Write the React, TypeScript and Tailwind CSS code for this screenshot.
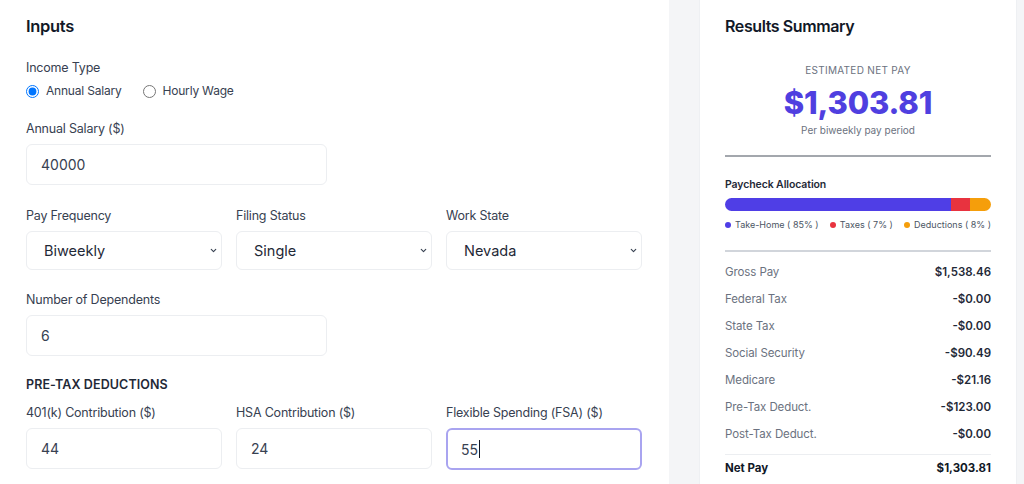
import { ChevronDown } from "lucide-react";

const font = { fontFamily: "Inter, 'Noto Sans', sans-serif" };

function Field({ label, value, focused }: { label: string; value: string; focused?: boolean }) {
  return (
    <div>
      <div className="text-[12.5px] leading-5 text-[#374151] tracking-[-0.2px] mb-[5px]">{label}</div>
      <div
        className={
          focused
            ? "h-[42px] rounded-md border-2 border-[#a9a4f0] bg-white flex items-center px-[13px] text-[14px] text-[#374151]"
            : "h-[41px] rounded-md border border-[#eceef1] bg-white flex items-center px-[14px] text-[14px] text-[#374151]"
        }
      >
        {value}
        {focused && <span className="w-px h-[18px] bg-[#111827] ml-[1px]" />}
      </div>
    </div>
  );
}

function SelectBox({ label, value }: { label: string; value: string }) {
  return (
    <div>
      <div className="text-[12.5px] leading-5 text-[#374151] tracking-[-0.2px] mb-[5px]">{label}</div>
      <div className="h-[39px] rounded-md border border-[#eceef1] bg-white flex items-center justify-between pl-[17px] pr-[3px] text-[14.5px] text-[#1f2937]">
        <span>{value}</span>
        <ChevronDown className="w-[9px] h-[9px] text-[#374151]" strokeWidth={3} />
      </div>
    </div>
  );
}

const rows = [
  ["Gross Pay", "$1,538.46"],
  ["Federal Tax", "-$0.00"],
  ["State Tax", "-$0.00"],
  ["Social Security", "-$90.49"],
  ["Medicare", "-$21.16"],
  ["Pre-Tax Deduct.", "-$123.00"],
  ["Post-Tax Deduct.", "-$0.00"],
];

export default function App() {
  return (
    <div className="w-[1024px] h-[484px] overflow-hidden bg-[#f4f5f7] flex" style={font}>
      {/* Inputs panel */}
      <div className="w-[669px] bg-white pl-[26px] pr-[27px] pt-[14px]">
        <h2 className="text-[16.5px] leading-6 font-semibold text-[#111827] tracking-[-0.3px]">Inputs</h2>

        <div className="mt-[20px] text-[12.5px] leading-5 text-[#374151] tracking-[-0.2px]">Income Type</div>
        <div className="mt-[3px] h-5 flex items-center gap-[21px] text-[12px] text-[#374151] tracking-[-0.2px]">
          <label className="flex items-center gap-[7px]">
            <input type="radio" name="income" defaultChecked className="w-[13px] h-[13px] m-0" />
            Annual Salary
          </label>
          <label className="flex items-center gap-[7px]">
            <input type="radio" name="income" className="w-[13px] h-[13px] m-0" />
            Hourly Wage
          </label>
        </div>

        <div className="mt-[18px] w-[301px]">
          <Field label="Annual Salary ($)" value="40000" />
        </div>

        <div className="mt-[21px] grid grid-cols-3 gap-[14px]">
          <SelectBox label="Pay Frequency" value="Biweekly" />
          <SelectBox label="Filing Status" value="Single" />
          <SelectBox label="Work State" value="Nevada" />
        </div>

        <div className="mt-[20px] w-[301px]">
          <Field label="Number of Dependents" value="6" />
        </div>

        <div className="mt-[19px] text-[12.5px] leading-5 font-semibold text-[#1f2937] tracking-[0.1px]">PRE-TAX DEDUCTIONS</div>
        <div className="mt-[8px] grid grid-cols-3 gap-[14px]">
          <Field label="401(k) Contribution ($)" value="44" />
          <Field label="HSA Contribution ($)" value="24" />
          <Field label="Flexible Spending (FSA) ($)" value="55" focused />
        </div>
      </div>

      {/* Results panel */}
      <div className="ml-[30px] w-[318px] bg-white border-x border-[#eef0f3] px-[25px] pt-[14px]">
        <h2 className="text-[16px] leading-6 font-semibold text-[#111827] tracking-[-0.4px]">Results Summary</h2>

        <div className="mt-[24px] flex flex-col items-center">
          <div className="text-[10px] leading-4 text-[#6b7280] tracking-[0.3px]">ESTIMATED NET PAY</div>
          <div className="mt-[5px] text-[31px] leading-[40px] font-extrabold text-[#4f3fe0] tracking-[-0.2px]">$1,303.81</div>
          <div className="-mt-[1px] text-[10px] leading-4 text-[#6b7280]">Per biweekly pay period</div>
        </div>

        <div className="mt-[17px] h-[2px] bg-[#a3a7ad]" />

        <div className="mt-[20px] text-[10.5px] leading-4 font-semibold text-[#1f2937] tracking-[-0.1px]">Paycheck Allocation</div>
        <div className="mt-[5px] h-[13px] rounded-full overflow-hidden flex">
          <div className="bg-[#4f3ee6] w-[85%]" />
          <div className="bg-[#e8333f] w-[7%]" />
          <div className="bg-[#f59e0b] w-[8%]" />
        </div>
        <div className="mt-[8px] flex items-center justify-between text-[9px] leading-3 text-[#4b5563]">
          <span className="flex items-center gap-[4px]">
            <span className="w-[6px] h-[6px] rounded-full bg-[#4f3ee6]" />
            Take-Home ( 85% )
          </span>
          <span className="flex items-center gap-[4px]">
            <span className="w-[6px] h-[6px] rounded-full bg-[#e8333f]" />
            Taxes ( 7% )
          </span>
          <span className="flex items-center gap-[4px]">
            <span className="w-[6px] h-[6px] rounded-full bg-[#f59e0b]" />
            Deductions ( 8% )
          </span>
        </div>

        <div className="mt-[19px] h-[2px] bg-[#d1d5db]" />

        <div className="mt-[7px] flex flex-col">
          {rows.map(([k, v]) => (
            <div key={k} className="h-[27px] flex items-center justify-between">
              <span className="text-[11.5px] text-[#6b7280] tracking-[-0.1px]">{k}</span>
              <span className="text-[11.5px] font-semibold text-[#1f2937]">{v}</span>
            </div>
          ))}
        </div>
        <div className="mt-[6px] h-px bg-[#eceef1]" />
        <div className="h-[27px] flex items-center justify-between">
          <span className="text-[11.5px] font-bold text-[#111827]">Net Pay</span>
          <span className="text-[11.5px] font-bold text-[#111827]">$1,303.81</span>
        </div>
      </div>
    </div>
  );
}
